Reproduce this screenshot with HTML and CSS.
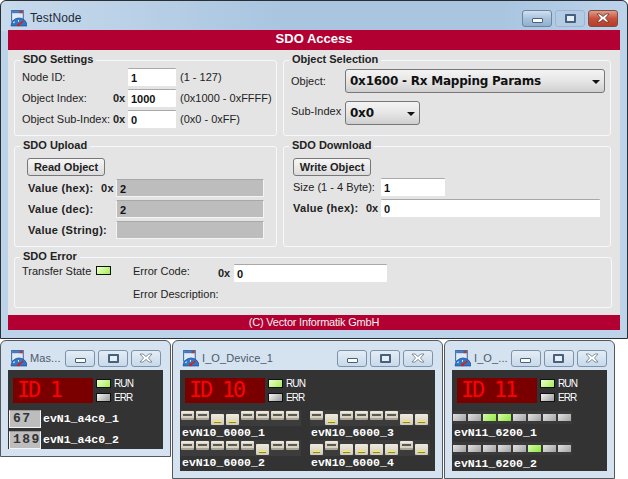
FILE: index.html
```html
<!DOCTYPE html>
<html lang="en">
<head>
    <meta charset="UTF-8">
    <meta name="viewport" content="width=device-width, initial-scale=1.0">
    <title>TestNode</title>
    <link rel="stylesheet" href="styles.css">
</head>
<body>
    <svg class="defs" width="0" height="0">
        <symbol id="app-icon" viewBox="0 0 16 16">
            <rect x="1.5" y="0.5" width="11" height="10" fill="#dfeaf6" stroke="#3f6fa8"/>
            <rect x="2" y="1" width="10" height="2" fill="#3f78c0"/>
            <rect x="9" y="1" width="3" height="2" fill="#c83030"/>
            <path d="M1 15 A7.5 7.5 0 0 1 16 15 Z" fill="#2f78c8" stroke="#1f4f90" stroke-width="0.7"/>
            <path d="M8 14 L12.5 10.5" stroke="#e02020" stroke-width="1.6"/>
            <circle cx="8" cy="14" r="1.4" fill="#d02020"/>
            <path d="M3 12 L4.5 11 M8 9.5 L8 11" stroke="#dfeaf6"/>
        </symbol>
        <symbol id="close-x" viewBox="0 0 14 10">
            <path d="M1 1 H4 L7 3.5 L10 1 H13 L9.5 5 L13 9 H10 L7 6.5 L4 9 H1 L4.5 5 Z" fill="white" stroke="currentColor" stroke-width="0.8"/>
        </symbol>
    </svg>

    <!-- Hauptfenster -->
    <div class="window main-window">
        <div class="titlebar">
            <svg class="app-icon"><use href="#app-icon"/></svg>
            <span class="title">TestNode</span>
            <div class="win-buttons">
                <span class="win-btn"><i class="glyph-min"></i></span>
                <span class="win-btn flat"><i class="glyph-max"></i></span>
                <span class="win-btn close"><svg class="close-x"><use href="#close-x"/></svg></span>
            </div>
        </div>
        <div class="client">
            <div class="banner">SDO Access</div>
            <div class="groups">
                <fieldset class="group settings">
                    <legend>SDO Settings</legend>
                    <label>Node ID:</label><b></b><input class="field" value="1"><span>(1 - 127)</span>
                    <label>Object Index:</label><b>0x</b><input class="field" value="1000"><span>(0x1000 - 0xFFFF)</span>
                    <label>Object Sub-Index:</label><b>0x</b><input class="field" value="0"><span>(0x0 - 0xFF)</span>
                </fieldset>
                <fieldset class="group selection">
                    <legend>Object Selection</legend>
                    <label>Object:</label>
                    <div class="combo wide">0x1600 - Rx Mapping Params<i></i></div>
                    <label class="raised">Sub-Index</label>
                    <div class="combo narrow">0x0<i></i></div>
                </fieldset>
                <fieldset class="group upload">
                    <legend>SDO Upload</legend>
                    <button class="action">Read Object</button>
                    <div class="upload-rows">
                        <label>Value (hex):</label><b>0x</b><input class="field gray" value="2">
                        <label>Value (dec):</label><b></b><input class="field gray" value="2">
                        <label>Value (String):</label><b></b><input class="field gray" value="">
                    </div>
                </fieldset>
                <fieldset class="group download">
                    <legend>SDO Download</legend>
                    <button class="action">Write Object</button>
                    <div class="download-rows">
                        <span class="plain">Size (1 - 4 Byte):</span><b></b><input class="field short" value="1">
                        <label>Value (hex):</label><b>0x</b><input class="field" value="0">
                    </div>
                </fieldset>
                <fieldset class="group error">
                    <legend>SDO Error</legend>
                    <div class="state">Transfer State <i class="led green"></i></div>
                    <div class="error-rows">
                        <span class="raised">Error Code:</span><b>0x</b><input class="field" value="0">
                        <span class="desc">Error Description:</span>
                    </div>
                </fieldset>
            </div>
            <div class="footer">(C) Vector Informatik GmbH</div>
        </div>
    </div>

    <!-- Master -->
    <div class="window node-window node-master">
        <div class="titlebar">
            <svg class="app-icon"><use href="#app-icon"/></svg>
            <span class="title">Mas...</span>
            <div class="win-buttons">
                <span class="win-btn"><i class="glyph-min"></i></span>
                <span class="win-btn"><i class="glyph-max"></i></span>
                <span class="win-btn close"><svg class="close-x"><use href="#close-x"/></svg></span>
            </div>
        </div>
        <div class="panel">
            <div class="status">
                <div class="node-id">ID 1</div>
                <div class="leds">
                    <div><i class="led green"></i>RUN</div>
                    <div><i class="led off"></i>ERR</div>
                </div>
            </div>
            <div class="value-row"><span class="value-box">67</span><span class="signal">evN1_a4c0_1</span></div>
            <div class="value-row"><span class="value-box">189</span><span class="signal">evN1_a4c0_2</span></div>
        </div>
    </div>

    <!-- I_O_Device_1 -->
    <div class="window node-window node-device">
        <div class="titlebar">
            <svg class="app-icon"><use href="#app-icon"/></svg>
            <span class="title">I_O_Device_1</span>
            <div class="win-buttons">
                <span class="win-btn"><i class="glyph-min"></i></span>
                <span class="win-btn"><i class="glyph-max"></i></span>
                <span class="win-btn close"><svg class="close-x"><use href="#close-x"/></svg></span>
            </div>
        </div>
        <div class="panel">
            <div class="status">
                <div class="node-id">ID 10</div>
                <div class="leds">
                    <div><i class="led green"></i>RUN</div>
                    <div><i class="led off"></i>ERR</div>
                </div>
            </div>
            <div class="port-grid">
                <div>
                    <div class="ports"><i></i><i></i><i class="on"></i><i class="on"></i><i></i><i></i><i></i><i></i></div>
                    <div class="signal">evN10_6000_1</div>
                    <div class="ports"><i></i><i></i><i></i><i></i><i></i><i class="on"></i><i></i><i></i></div>
                    <div class="signal">evN10_6000_2</div>
                </div>
                <div>
                    <div class="ports"><i></i><i class="on"></i><i></i><i></i><i></i><i></i><i class="on"></i><i class="on"></i></div>
                    <div class="signal">evN10_6000_3</div>
                    <div class="ports"><i class="on"></i><i></i><i class="on"></i><i class="on"></i><i class="on"></i><i class="on"></i><i></i><i class="on"></i></div>
                    <div class="signal">evN10_6000_4</div>
                </div>
            </div>
        </div>
    </div>

    <!-- I_O_... -->
    <div class="window node-window node-io">
        <div class="titlebar">
            <svg class="app-icon"><use href="#app-icon"/></svg>
            <span class="title">I_O_...</span>
            <div class="win-buttons">
                <span class="win-btn"><i class="glyph-min"></i></span>
                <span class="win-btn"><i class="glyph-max"></i></span>
                <span class="win-btn close"><svg class="close-x"><use href="#close-x"/></svg></span>
            </div>
        </div>
        <div class="panel">
            <div class="status">
                <div class="node-id">ID 11</div>
                <div class="leds">
                    <div><i class="led green"></i>RUN</div>
                    <div><i class="led off"></i>ERR</div>
                </div>
            </div>
            <div class="bits"><i></i><i></i><i class="on"></i><i class="on"></i><i></i><i></i><i></i><i></i></div>
            <div class="signal">evN11_6200_1</div>
            <div class="bits"><i></i><i></i><i></i><i></i><i></i><i class="on"></i><i></i><i></i></div>
            <div class="signal">evN11_6200_2</div>
        </div>
    </div>
</body>
</html>
```

FILE: styles.css
```css
html, body {
    margin: 0;
    height: 479px;
    overflow: hidden;
    background-color: white;
    font-family: "Liberation Sans", Arial, sans-serif;
    font-size: 11px;
    color: #222;
}
.defs {
    position: absolute;
}

/* Fenster */
.window {
    position: absolute;
    box-sizing: border-box;
    border: 1px solid #2b2f33;
    border-radius: 6px 6px 0 0;
    padding: 0 7px 7px;
    background: linear-gradient(90deg, #c8daec, #a9c5e0 45%, #a9c5e0 80%, #bcd3ea) top / 100% 30px no-repeat, #bcd3ea;
}
.main-window {
    left: 0;
    top: 0;
    width: 628px;
    height: 339px;
}
.node-window {
    top: 340px;
    background: #d5e2f0;
    border-color: #55595e;
}
.node-master {
    left: 0;
    width: 171px;
    height: 117px;
}
.node-device {
    left: 172px;
    width: 271px;
    height: 139px;
}
.node-io {
    left: 444px;
    width: 171px;
    height: 139px;
}
.titlebar {
    box-sizing: border-box;
    height: 29px;
    padding-top: 5px;
    display: flex;
    align-items: center;
    gap: 3px;
}
.app-icon {
    width: 17px;
    height: 17px;
    margin-left: 2px;
    flex: none;
}
.title {
    font-size: 12px;
    letter-spacing: 0.1px;
    color: #1d2a38;
    white-space: nowrap;
}
.node-window .title {
    font-size: 11px;
    color: #4b5b6b;
}
.win-buttons {
    margin-left: auto;
    margin-right: 2px;
    display: flex;
    gap: 3px;
}
.win-btn {
    box-sizing: border-box;
    width: 30px;
    height: 17px;
    border: 1px solid #6d85a0;
    border-radius: 3px;
    background: linear-gradient(#d0e0f0, #a9c2dc 50%, #8fb0d0);
    display: flex;
    align-items: center;
    justify-content: center;
}
.win-btn.flat {
    border-color: #9db5ce;
    background: #b4cce3;
}
.win-btn.close {
    background: linear-gradient(#e09c8c, #c8503c 50%, #b83c2c);
    border-color: #80503f;
    color: #6a3024;
}
.node-window .win-btn {
    background: linear-gradient(#e4edf6, #c8d9ea);
    border-color: #7d92aa;
}
.node-window .win-btn.close {
    color: #66778a;
}
.close-x {
    width: 14px;
    height: 10px;
}
.glyph-min {
    box-sizing: border-box;
    width: 11px;
    height: 5px;
    margin-top: 4px;
    background: white;
    border: 1px solid #47607c;
    border-radius: 1px;
}
.glyph-max {
    box-sizing: border-box;
    width: 11px;
    height: 9px;
    border: 2px solid #47607c;
    background: #e8eef5;
    border-radius: 1px;
}

/* Hauptbereich */
.client {
    background-color: #e4e4e4;
    height: 300px;
    display: flex;
    flex-direction: column;
}
.banner {
    height: 20px;
    line-height: 17px;
    background-color: #b30033;
    color: white;
    font-size: 13px;
    font-weight: bold;
    text-align: center;
}
.footer {
    height: 15px;
    line-height: 15px;
    background-color: #b30033;
    color: #f2f2f2;
    font-size: 11px;
    letter-spacing: -0.2px;
    text-align: center;
}
.groups {
    flex: 1;
    display: grid;
    grid-template-columns: 263px 328px;
    grid-template-rows: 76px 101px 51px;
    column-gap: 6px;
    row-gap: 10px;
    padding: 10px 0 0 6px;
}
.group {
    margin: 0;
    padding: 0;
    min-width: 0;
    box-sizing: border-box;
    border: 1px solid #f6f9fc;
    border-radius: 3px;
    position: relative;
}
.group legend {
    position: absolute;
    left: 5px;
    top: -8px;
    padding: 0 3px;
    background-color: #e4e4e4;
    font-size: 11px;
    font-weight: bold;
    line-height: 12px;
    color: #222;
}
.group label, .group span, .state {
    white-space: nowrap;
}
.raised {
    padding-bottom: 4px;
}
.field {
    box-sizing: border-box;
    height: 18px;
    border: none;
    border-top: 1px solid #a8a8a8;
    border-radius: 1px;
    padding: 1px 3px 0;
    font-family: "Liberation Sans", Arial, sans-serif;
    font-size: 11px;
    font-weight: bold;
    color: #111;
    background: white;
    min-width: 0;
}
.field.gray {
    background-color: #bdbdbd;
    border: 1px solid #f4f4f4;
    border-top-color: #a8a8a8;
}

/* SDO Settings */
.settings {
    display: grid;
    grid-template-columns: 91px 15px 48px auto;
    grid-auto-rows: 18px;
    row-gap: 3px;
    align-items: center;
    align-content: start;
    padding: 7px 0 0 7px;
}
.settings .field {
    width: 48px;
}
.settings span {
    margin-left: 4px;
}

/* Object Selection */
.selection {
    display: grid;
    grid-template-columns: 54px auto;
    grid-template-rows: 24px 24px;
    row-gap: 8px;
    align-items: center;
    align-content: start;
    justify-items: start;
    padding: 8px 0 0 7px;
}
.combo {
    box-sizing: border-box;
    height: 24px;
    border: 1px solid #777;
    border-radius: 3px;
    background: linear-gradient(#f4f4f4, #e6e6e6 50%, #cfcfcf);
    font-family: "DejaVu Sans", sans-serif;
    font-size: 12px;
    letter-spacing: -0.23px;
    font-weight: bold;
    line-height: 22px;
    padding-left: 4px;
    color: #111;
    position: relative;
}
.combo i {
    position: absolute;
    right: 4px;
    top: 10px;
    border-left: 4px solid transparent;
    border-right: 4px solid transparent;
    border-top: 4px solid #111;
}
.combo.wide {
    width: 260px;
}
.combo.narrow {
    width: 75px;
}

/* Upload und Download */
.action {
    box-sizing: border-box;
    display: block;
    width: 78px;
    height: 18px;
    padding: 0;
    border: 1px solid #777;
    border-radius: 3px;
    background: linear-gradient(#f6f6f6, #dcdcdc);
    font-family: "Liberation Sans", Arial, sans-serif;
    font-size: 11px;
    font-weight: bold;
    color: #222;
}
.upload {
    padding: 11px 0 0 12px;
}
.upload-rows {
    display: grid;
    grid-template-columns: 73px 15px 148px;
    grid-auto-rows: 18px;
    row-gap: 3px;
    align-items: center;
    margin: 3px 0 0 1px;
    font-weight: bold;
    letter-spacing: 0.3px;
}
.download {
    padding: 11px 0 0 9px;
}
.download-rows {
    display: grid;
    grid-template-columns: 73px 15px 219px;
    grid-auto-rows: 18px;
    row-gap: 3px;
    align-items: center;
    margin-top: 2px;
}
.download-rows label {
    font-weight: bold;
    letter-spacing: 0.3px;
}
.download-rows .short {
    width: 64px;
}
.plain {
    color: #222;
}

/* SDO Error */
.error {
    grid-column: 1 / span 2;
    width: 598px;
    display: flex;
    align-items: flex-start;
    padding: 6px 0 0 7px;
}
.state {
    width: 111px;
    line-height: 14px;
    display: flex;
    align-items: flex-start;
    gap: 5px;
}
.state .led {
    margin-top: 2px;
}
.error-rows {
    display: grid;
    grid-template-columns: 85px 16px 153px;
    grid-auto-rows: 18px;
    row-gap: 3px;
    align-items: center;
}
.error-rows .desc {
    grid-column: 1 / span 3;
}

/* Knotenfenster */
.led {
    display: inline-block;
    box-sizing: border-box;
    width: 15px;
    height: 9px;
    border: 1px solid #111;
}
.led.green {
    background: linear-gradient(135deg, #ecffd0, #a4ef50);
}
.led.off {
    background: linear-gradient(135deg, #f4f4f4, #9a9a9a);
}
.panel {
    background-color: #333;
    height: 79px;
    color: white;
    padding-top: 8px;
    box-sizing: border-box;
}
.node-device .panel, .node-io .panel {
    height: 101px;
}
.status {
    display: flex;
    padding-left: 5px;
    gap: 3px;
}
.node-id {
    width: 80px;
    height: 25px;
    line-height: 24px;
    padding-left: 4px;
    box-sizing: border-box;
    background-color: #7a0000;
    color: #ff0000;
    font-family: "DejaVu Sans Mono", monospace;
    font-size: 22px;
    letter-spacing: -2.3px;
}
.leds {
    display: flex;
    flex-direction: column;
    gap: 5px;
    padding-top: 1px;
    font-size: 10px;
    letter-spacing: -0.9px;
}
.leds div {
    display: flex;
    align-items: center;
    gap: 3px;
    height: 9px;
}
.signal {
    font-family: "Liberation Mono", monospace;
    font-size: 11.5px;
    font-weight: bold;
    color: white;
    white-space: nowrap;
}
.value-row {
    display: flex;
    align-items: center;
    gap: 2px;
    padding-left: 1px;
    height: 18px;
    margin-top: 3px;
}
.value-row .signal {
    padding-bottom: 2px;
}
.status + .value-row {
    margin-top: 7px;
}
.value-box {
    box-sizing: border-box;
    width: 32px;
    height: 18px;
    line-height: 16px;
    background-color: #bdbdbd;
    border: 1px solid #f4f4f4;
    border-top-color: #999;
    padding-left: 3px;
    font-family: "Liberation Mono", monospace;
    font-size: 13px;
    font-weight: bold;
    letter-spacing: 1.5px;
    color: #333;
}

/* Ports */
.port-grid {
    display: grid;
    grid-template-columns: 129px 120px;
    padding-left: 1px;
    margin-top: 7px;
}
.port-grid .signal {
    padding-left: 1px;
    line-height: 14px;
}
.ports {
    display: flex;
    align-items: flex-start;
    width: 120px;
    height: 16px;
    background-color: #3c3c3c;
}
.ports i {
    display: block;
    width: 13px;
    height: 9px;
    margin: 1px 2px 0 0;
    background: linear-gradient(#ece8dc 0 2px, #d8d3c4 2px 7px, #a9a596 7px);
    border-radius: 1px;
    position: relative;
}
.ports i::after {
    content: "";
    position: absolute;
    left: 2px;
    right: 2px;
    top: 3px;
    height: 2px;
    background: #5a5a50;
}
.ports i.on {
    height: 11px;
    margin-top: 4px;
    background: linear-gradient(#efebe0, #cfcabb);
}
.ports i.on::after {
    left: 3px;
    right: 3px;
    top: 7px;
    height: 1px;
    background: #fff020;
    box-shadow: 0 1px 0 #8f8a20;
}

/* Bits */
.bits {
    display: flex;
    gap: 2px;
    align-items: center;
    height: 13px;
    width: 119px;
    margin-top: 8px;
    padding-left: 1px;
    background-color: #3a3a3a;
}
.bits i {
    width: 13px;
    height: 7px;
    background: linear-gradient(135deg, #e0e0e0, #a4a4a4);
}
.bits i.on {
    background: linear-gradient(135deg, #d8f8b0, #8ee83c);
}
.node-io .signal {
    line-height: 14px;
    padding-left: 2px;
    margin-top: 2px;
}
.node-io .signal + .bits {
    margin-top: 2px;
}
```
